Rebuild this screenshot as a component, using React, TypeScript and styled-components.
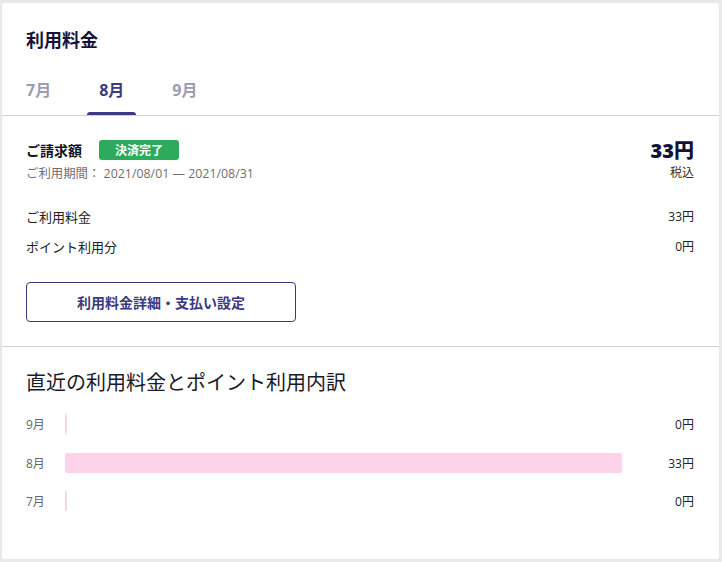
import styled, { createGlobalStyle } from "styled-components";

const GlobalStyle = createGlobalStyle`
  html, body {
    margin: 0;
    padding: 0;
    background: #e8e8ea;
  }
  body {
    font-family: "Open Sans", "Noto Sans CJK JP", sans-serif;
    color: #222222;
  }
`;

interface UsageRow {
  month: string;
  amount: number;
}

const history: UsageRow[] = [
  { month: "9月", amount: 0 },
  { month: "8月", amount: 33 },
  { month: "7月", amount: 0 },
];

const months = ["7月", "8月", "9月"];

export default function App() {
  const max = Math.max(...history.map((row) => row.amount), 1);

  return (
    <>
      <GlobalStyle />
      <Page>
        <Card>
          <Header>
            <Title>利用料金</Title>
            <Tabs>
              {months.map((month) => (
                <Tab key={month} $active={month === "8月"}>
                  {month}
                </Tab>
              ))}
            </Tabs>
          </Header>

          <Billing>
            <BillingTop>
              <div>
                <BillingLabelRow>
                  <BillingLabel>ご請求額</BillingLabel>
                  <Badge>決済完了</Badge>
                </BillingLabelRow>
                <Period>ご利用期間： 2021/08/01 — 2021/08/31</Period>
              </div>
              <Total>
                <TotalAmount>33円</TotalAmount>
                <TaxNote>税込</TaxNote>
              </Total>
            </BillingTop>

            <LineItems>
              <LineItem>
                <span>ご利用料金</span>
                <span>33円</span>
              </LineItem>
              <LineItem>
                <span>ポイント利用分</span>
                <span>0円</span>
              </LineItem>
            </LineItems>

            <OutlineButton type="button">利用料金詳細・支払い設定</OutlineButton>
          </Billing>

          <History>
            <HistoryTitle>直近の利用料金とポイント利用内訳</HistoryTitle>
            <Chart>
              {history.map((row) => (
                <ChartRow key={row.month}>
                  <ChartLabel>{row.month}</ChartLabel>
                  <Track>
                    <Bar style={{ width: `${(row.amount / max) * 100}%` }} />
                  </Track>
                  <ChartValue>{row.amount}円</ChartValue>
                </ChartRow>
              ))}
            </Chart>
          </History>
        </Card>
      </Page>
    </>
  );
}

const Page = styled.div`
  padding: 3px 3px 4px 2px;
`;

const Card = styled.div`
  background: #ffffff;
  border-radius: 3px;
  display: flex;
  flex-direction: column;
`;

const Header = styled.div`
  padding: 27px 25px 0 24px;
  border-bottom: 1px solid #cfcfd6;
`;

const Title = styled.h2`
  margin: 0;
  font-size: 18px;
  line-height: 20px;
  font-weight: 700;
  color: #14133a;
`;

const Tabs = styled.div`
  display: flex;
  gap: 24px;
  margin: 22px 0 0 -12px;
`;

const Tab = styled.div<{ $active: boolean }>`
  position: relative;
  padding: 8px 12px 15px;
  font-size: 16px;
  line-height: 20px;
  font-weight: 700;
  color: ${(p) => (p.$active ? "#3b3980" : "#9d9cb4")};

  &::after {
    content: "";
    display: ${(p) => (p.$active ? "block" : "none")};
    position: absolute;
    left: 0;
    right: 0;
    bottom: 0;
    height: 3px;
    border-radius: 3px 3px 0 0;
    background: #3b3980;
  }
`;

const Billing = styled.div`
  padding: 24px 25px 24px 24px;
  border-bottom: 1px solid #cfcfd6;
`;

const BillingTop = styled.div`
  display: flex;
  justify-content: space-between;
  align-items: flex-start;
`;

const BillingLabelRow = styled.div`
  display: flex;
  align-items: center;
  gap: 17px;
  height: 20px;
`;

const BillingLabel = styled.span`
  font-size: 14px;
  font-weight: 700;
  color: #111122;
`;

const Badge = styled.span`
  display: inline-flex;
  align-items: center;
  height: 20px;
  padding: 0 16px;
  border-radius: 3px;
  background: #2eaa5c;
  color: #ffffff;
  font-size: 12px;
  font-weight: 700;
`;

const Period = styled.div`
  margin-top: 6px;
  font-size: 12.4px;
  line-height: 16px;
  color: #6f6f6f;
`;

const Total = styled.div`
  display: flex;
  flex-direction: column;
  align-items: flex-end;
`;

const TotalAmount = styled.div`
  font-size: 20px;
  line-height: 22px;
  font-weight: 800;
  color: #12113a;
`;

const TaxNote = styled.div`
  margin-top: 4px;
  font-size: 12px;
  line-height: 14px;
  color: #333333;
`;

const LineItems = styled.div`
  display: flex;
  flex-direction: column;
  gap: 10px;
  margin-top: 24px;
`;

const LineItem = styled.div`
  display: flex;
  justify-content: space-between;
  align-items: center;
  height: 20px;
  font-size: 13px;
  color: #222222;

  & > span:last-child {
    font-size: 12px;
  }
`;

const OutlineButton = styled.button`
  display: block;
  margin-top: 26px;
  width: 270px;
  height: 40px;
  border: 1px solid #3b3a78;
  border-radius: 4px;
  background: #ffffff;
  font-family: "Open Sans", "Noto Sans CJK JP", sans-serif;
  font-size: 14px;
  font-weight: 700;
  color: #3b3980;
  cursor: pointer;
`;

const History = styled.div`
  padding: 22px 25px 48px 24px;
`;

const HistoryTitle = styled.h3`
  margin: 0;
  font-size: 20px;
  line-height: 28px;
  font-weight: 400;
  color: #1a1a2a;
`;

const Chart = styled.div`
  display: flex;
  flex-direction: column;
  gap: 18.5px;
  margin-top: 17px;
`;

const ChartRow = styled.div`
  display: grid;
  grid-template-columns: 39px 1fr 72px;
  align-items: center;
  height: 20px;
`;

const ChartLabel = styled.span`
  font-size: 12px;
  color: #666666;
`;

const Track = styled.div`
  height: 20px;
`;

const Bar = styled.div`
  height: 100%;
  min-width: 2px;
  border-radius: 2px;
  background: #fdd3ea;
`;

const ChartValue = styled.span`
  text-align: right;
  font-size: 12px;
  color: #222222;
`;
